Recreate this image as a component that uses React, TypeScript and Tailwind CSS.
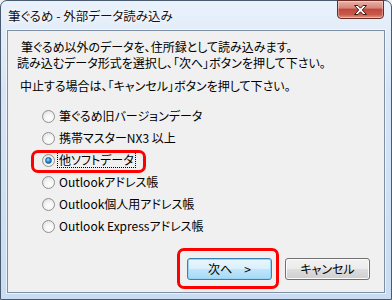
import React from "react";

const font = "font-['MS_UI_Gothic','Noto_Sans_CJK_JP','Noto_Sans',sans-serif] [font-feature-settings:'palt']";

function Radio({ checked }: { checked?: boolean }) {
  return (
    <span className="relative w-[13px] h-[13px] rounded-full border border-[#8e8f8f] bg-[radial-gradient(circle_at_60%_65%,#ffffff_0%,#f4f4f4_45%,#d6d6d6_100%)] shrink-0 flex items-center justify-center">
      {checked && (
        <span className="w-[7px] h-[7px] rounded-full bg-[radial-gradient(circle_at_40%_35%,#aee3ff_0%,#2c8ed8_45%,#0d4f8c_100%)] border border-[#215f9a]" />
      )}
    </span>
  );
}

function Option({ label, checked, focus }: { label: string; checked?: boolean; focus?: boolean }) {
  return (
    <div className="flex items-center h-[22px] gap-[3px]">
      <Radio checked={checked} />
      <span className={"leading-[14px] px-[1px] " + (focus ? "outline outline-1 outline-dotted outline-black" : "")}>{label}</span>
    </div>
  );
}

export default function App() {
  return (
    <div className={"w-[392px] h-[300px] relative overflow-hidden bg-[#f0f0f0] text-[12px] text-black " + font}>
      <div className="w-[392px] h-[300px] flex flex-col rounded-t-[7px] border border-[#4a5a6e] bg-[linear-gradient(180deg,#e9f1fb_0%,#d6e5f6_30%,#c9dcf1_100%)]">
        {/* title bar */}
        <div className="h-[29px] flex items-start relative">
          <span className="pl-[7px] pt-[7px] text-[12.5px] leading-[16px] text-[#111] [text-shadow:0_0_6px_#ffffff,0_0_3px_#ffffff]">筆ぐるめ - 外部データ読み込み</span>
          <div className="ml-auto mr-[7px] mt-[-1px] w-[47px] h-[19px] rounded-b-[4px] border border-[#6b2b24] bg-[linear-gradient(180deg,#e9b3a8_0%,#d7877a_40%,#c2483c_50%,#c85a4a_80%,#e09a86_100%)] flex items-center justify-center shadow-[inset_0_0_0_1px_rgba(255,255,255,0.35)]">
            <svg width="15" height="12" viewBox="0 0 15 12">
              <path
                d="M1.5 1.5 H5 L7.5 4.2 L10 1.5 H13.5 L9.3 6 L13.5 10.5 H10 L7.5 7.8 L5 10.5 H1.5 L5.7 6 Z"
                fill="#ffffff"
                stroke="#3d1a15"
                strokeWidth="1"
                strokeLinejoin="round"
              />
            </svg>
          </div>
        </div>
        {/* client area */}
        <div className="mx-[6px] h-[263px] border border-[#7f8fa3] bg-[#f0f0f0] relative shadow-[0_0_0_1px_rgba(255,255,255,0.6)]">
          <div className="pl-[9px] pt-[8px] leading-[16px]">
            <div className="pl-[4px]">筆ぐるめ以外のデータを、住所録として読み込みます。</div>
            <div>読み込むデータ形式を選択し、「次へ」ボタンを押して下さい。</div>
            <div className="mt-[7px] pl-[3px]">中止する場合は、「キャンセル」ボタンを押して下さい。</div>
          </div>
          <div className="pl-[34px] mt-[11px] flex flex-col">
            <Option label="筆ぐるめ旧バージョンデータ" />
            <Option label="携帯マスターNX3 以上" />
            <Option label="他ソフトデータ" checked focus />
            <Option label="Outlookアドレス帳" />
            <Option label="Outlook個人用アドレス帳" />
            <Option label="Outlook Expressアドレス帳" />
          </div>
          <div className="absolute right-[14px] bottom-[12px] flex gap-[13px]">
            <button className={"w-[85px] h-[22px] rounded-[3px] border border-[#3c7fb1] bg-[linear-gradient(180deg,#eaf6fd_0%,#d9f0fc_50%,#bee6fd_51%,#a7d9f5_100%)] shadow-[inset_0_0_0_1px_#98d5f5] text-[12px] leading-[14px] " + font}>
              次へ　&gt;
            </button>
            <button className={"w-[85px] h-[22px] rounded-[3px] border border-[#707070] bg-[linear-gradient(180deg,#f2f2f2_0%,#ebebeb_50%,#dddddd_51%,#cfcfcf_100%)] shadow-[inset_0_0_0_1px_#fcfcfc] text-[12px] leading-[14px] " + font}>
              キャンセル
            </button>
          </div>
          {/* red highlights */}
          <div className="absolute left-[23px] top-[119px] w-[115px] h-[23px] rounded-[7px] border-[3px] border-[#ff0000]" />
          <div className="absolute left-[169px] top-[217px] w-[102px] h-[41px] rounded-[7px] border-[3px] border-[#ff0000]" />
        </div>
      </div>
    </div>
  );
}
